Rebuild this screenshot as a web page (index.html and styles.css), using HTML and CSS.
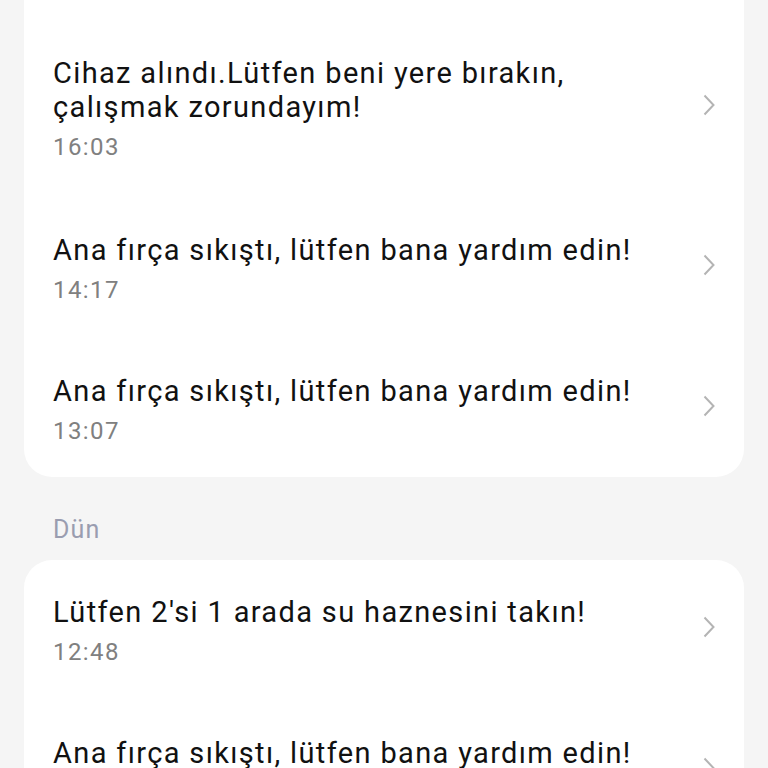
FILE: index.html
```html
<!DOCTYPE html>
<html lang="tr">
<head>
    <meta charset="UTF-8">
    <meta name="viewport" content="width=device-width, initial-scale=1.0">
    <title>Mesajlar</title>
    <link rel="stylesheet" href="styles.css">
</head>
<body>
    <div class="page">
        <section class="card card-cut">
            <div class="item">
                <div class="item-text">
                    <p class="item-title">Cihaz alındı.Lütfen beni yere bırakın, çalışmak zorundayım!</p>
                    <p class="item-time">16:03</p>
                </div>
                <svg class="chevron" viewBox="0 0 12 22"><path d="M1.5 1.5 L10.5 11 L1.5 20.5"/></svg>
            </div>
            <div class="item">
                <div class="item-text">
                    <p class="item-title">Ana fırça sıkıştı, lütfen bana yardım edin!</p>
                    <p class="item-time">14:17</p>
                </div>
                <svg class="chevron" viewBox="0 0 12 22"><path d="M1.5 1.5 L10.5 11 L1.5 20.5"/></svg>
            </div>
            <div class="item">
                <div class="item-text">
                    <p class="item-title">Ana fırça sıkıştı, lütfen bana yardım edin!</p>
                    <p class="item-time">13:07</p>
                </div>
                <svg class="chevron" viewBox="0 0 12 22"><path d="M1.5 1.5 L10.5 11 L1.5 20.5"/></svg>
            </div>
        </section>

        <h2 class="day">Dün</h2>

        <section class="card">
            <div class="item">
                <div class="item-text">
                    <p class="item-title">Lütfen 2'si 1 arada su haznesini takın!</p>
                    <p class="item-time">12:48</p>
                </div>
                <svg class="chevron" viewBox="0 0 12 22"><path d="M1.5 1.5 L10.5 11 L1.5 20.5"/></svg>
            </div>
            <div class="item">
                <div class="item-text">
                    <p class="item-title">Ana fırça sıkıştı, lütfen bana yardım edin!</p>
                    <p class="item-time">11:52</p>
                </div>
                <svg class="chevron" viewBox="0 0 12 22"><path d="M1.5 1.5 L10.5 11 L1.5 20.5"/></svg>
            </div>
        </section>
    </div>
</body>
</html>
```

FILE: styles.css
```css
/* genel */
body {
    margin: 0;
    background: #f5f5f5;
    font-family: Roboto, "Noto Sans", sans-serif;
    color: #111;
}

.page {
    padding: 0 24px;
}

/* kartlar */
.card {
    background: #fff;
    border-radius: 28px;
}

.card-cut {
    border-top-left-radius: 0;
    border-top-right-radius: 0;
    padding-top: 21px;
}

.item {
    display: flex;
    align-items: center;
    padding: 35px 29px 34px 29px;
}

.card-cut .item:first-child {
    padding-bottom: 36px;
}

.card-cut .item:last-child {
    padding-bottom: 31px;
}

.item-text {
    flex: 1;
    min-width: 0;
}

.item-title {
    margin: 0;
    font-size: 29px;
    line-height: 34px;
    letter-spacing: 1.35px;
    padding-right: 50px;
}

.item-time {
    margin: 8px 0 0;
    font-size: 24px;
    line-height: 30px;
    letter-spacing: 1.4px;
    color: #808080;
}

.chevron {
    width: 12px;
    height: 22px;
    margin-bottom: 8px;
    flex-shrink: 0;
    fill: none;
    stroke: #b4b4b4;
    stroke-width: 2;
}

/* gün başlığı */
.day {
    margin: 0;
    padding: 38px 29px 15px;
    font-size: 25px;
    line-height: 30px;
    letter-spacing: 1.2px;
    font-weight: 400;
    color: #9a9db0;
}
```
